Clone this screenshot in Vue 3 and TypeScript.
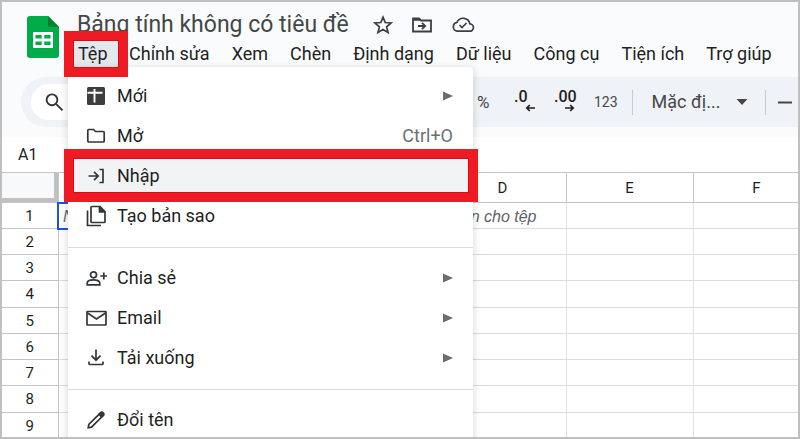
<script setup lang="ts">
import { ref } from 'vue'

interface MenuEntry {
  icon: string
  label: string
  hint?: string
  submenu?: boolean
  marked?: boolean
}

const title = ref('Bảng tính không có tiêu đề')
const cellName = ref('A1')
const font = ref('Mặc đị...')

const menus = ['Chỉnh sửa', 'Xem', 'Chèn', 'Định dạng', 'Dữ liệu', 'Công cụ', 'Tiện ích', 'Trợ giúp']

const groups: MenuEntry[][] = [
  [
    { icon: 'new', label: 'Mới', submenu: true },
    { icon: 'folder', label: 'Mở', hint: 'Ctrl+O' },
    { icon: 'import', label: 'Nhập', marked: true },
    { icon: 'copy', label: 'Tạo bản sao' },
  ],
  [
    { icon: 'share', label: 'Chia sẻ', submenu: true },
    { icon: 'mail', label: 'Email', submenu: true },
    { icon: 'download', label: 'Tải xuống', submenu: true },
  ],
  [{ icon: 'rename', label: 'Đổi tên' }],
]

const columns = ['', '', '', 'D', 'E', 'F']
const rows = [1, 2, 3, 4, 5, 6, 7, 8, 9]
const cells: Record<string, string> = { '1-0': 'N', '1-3': 'n cho tệp' }
</script>

<template>
  <div class="app">
    <header class="header">
      <svg class="logo" viewBox="0 0 32 42" aria-hidden="true">
        <path d="M3 0H21L32 11V39a3 3 0 0 1-3 3H3a3 3 0 0 1-3-3V3a3 3 0 0 1 3-3Z" fill="#00ac47" />
        <path d="M21 0L32 11H23a2 2 0 0 1-2-2Z" fill="#00832d" />
        <path fill-rule="evenodd" d="M6 16H26V32H6ZM8.500 19V22.500H14.700V19ZM17.300 19V22.500H23.500V19ZM8.500 25.500V29H14.700V25.500ZM17.300 25.500V29H23.500V25.500Z" fill="#fff" />
      </svg>
      <div class="heading">
        <div class="title-row">
          <input v-model="title" class="title" aria-label="Tên bảng tính" />
          <button class="icon-button" aria-label="Gắn dấu sao">
            <svg width="20" height="20" viewBox="0 0 20 20" fill="none" stroke="#3c4043" stroke-width="1.700">
              <path d="M10 2.200L12.200 7.500L18 8L13.600 11.800L15 17.400L10 14.400L5 17.400L6.400 11.800L2 8L7.800 7.500Z" />
            </svg>
          </button>
          <button class="icon-button" aria-label="Di chuyển">
            <svg width="22" height="20" viewBox="0 0 22 20" fill="none" stroke="#3c4043" stroke-width="1.800">
              <path d="M2 3.500H8L10 5.500H20V16.500H2Z" />
              <path d="M2 4.500H9" stroke-width="2.500" />
              <path d="M7 11H14M11 7.800L14.200 11L11 14.200" />
            </svg>
          </button>
          <button class="icon-button" aria-label="Trạng thái lưu">
            <svg width="24" height="20" viewBox="0 0 24 20" fill="none" stroke="#3c4043" stroke-width="1.700">
              <path d="M6.500 16.200H18.500a3.700 3.700 0 0 0 .4-7.400A6.800 6.800 0 0 0 6 7.300A4.500 4.500 0 0 0 6.500 16.200Z" />
              <path d="M8.500 10L11 12.500L15.500 8" />
            </svg>
          </button>
        </div>
        <nav class="menubar">
          <div class="file">
            <button class="bar-button file-button marked">Tệp</button>
            <div class="menu" role="menu">
              <div v-for="(group, g) in groups" :key="g" class="group">
                <button
                  v-for="item in group"
                  :key="item.label"
                  class="item"
                  :class="{ marked: item.marked }"
                  role="menuitem"
                >
                  <svg class="item-icon" viewBox="0 0 22 22" fill="none" stroke="#333638" stroke-width="1.700" aria-hidden="true">
                    <template v-if="item.icon === 'new'">
                      <rect x="2" y="2" width="18" height="18" rx="1.500" fill="#3c3e40" stroke="none" />
                      <path d="M2.500 7.800H17.500M9.500 4V17.500" stroke="#fff" stroke-width="1.900" />
                    </template>
                    <path v-else-if="item.icon === 'folder'" d="M2.800 5.500a1 1 0 0 1 1-1H8.500L10.500 6.500H18.200a1 1 0 0 1 1 1V16a1 1 0 0 1-1 1H3.800a1 1 0 0 1-1-1Z" />
                    <path v-else-if="item.icon === 'import'" d="M3.500 11H13M9 6.800L13.200 11L9 15.200M14.500 4.500H18V17.500H14.500" />
                    <template v-else-if="item.icon === 'copy'">
                      <path d="M7 1.500H15L20 6.500V16.500a1 1 0 0 1-1 1H7a1 1 0 0 1-1-1V2.500a1 1 0 0 1 1-1Z" />
                      <path d="M14.500 1.500V7H20" fill="#333638" />
                      <path d="M2.500 5.500V20.500H16" />
                    </template>
                    <template v-else-if="item.icon === 'share'">
                      <circle cx="8.500" cy="7.800" r="3" />
                      <path d="M2.200 17.800V16C2.200 11.800 14.800 11.800 14.800 16V17.800Z M18.800 5.500V12.500M15.300 9H22" />
                    </template>
                    <template v-else-if="item.icon === 'mail'">
                      <rect x="2" y="4.500" width="19" height="13.500" rx="0.500" />
                      <path d="M2.500 6L11.500 12L20.500 6" />
                    </template>
                    <path v-else-if="item.icon === 'download'" d="M11 2.500V13M6.500 8.700L11 13.200L15.500 8.700M4 14.500V16.500a1 1 0 0 0 1 1H17a1 1 0 0 0 1-1V14.500" />
                    <template v-else>
                      <path d="M3.200 18.800L3.800 15.500L15 4.300a1.800 1.800 0 0 1 2.700 2.700L6.500 18.200Z" />
                      <path d="M14 5.300L15.500 3.800a1.800 1.800 0 0 1 2.700 2.700L16.700 8Z" fill="#333638" />
                    </template>
                  </svg>
                  <span class="item-label">{{ item.label }}</span>
                  <span v-if="item.hint" class="hint">{{ item.hint }}</span>
                  <svg v-if="item.submenu" class="chevron" viewBox="0 0 10 10" aria-hidden="true">
                    <path d="M0 0.500L10 5L0 9.500Z" fill="#6b6d70" />
                  </svg>
                </button>
              </div>
            </div>
          </div>
          <button v-for="name in menus" :key="name" class="bar-button">{{ name }}</button>
        </nav>
      </div>
    </header>

    <div class="toolbar-wrap">
      <div class="toolbar">
        <button class="search" aria-label="Tìm trong trình đơn">
          <svg width="20" height="20" viewBox="0 0 20 20" fill="none" stroke="#333638" stroke-width="1.900">
            <circle cx="8" cy="7.800" r="5.400" />
            <path d="M12 11.800L18.500 18.300" />
          </svg>
        </button>
        <button class="tool percent">%</button>
        <button class="tool decimal" aria-label="Giảm số thập phân">
          <span>.0</span>
          <svg width="10" height="8" viewBox="0 0 10 8" fill="none" stroke="#1f1f1f" stroke-width="1.700">
            <path d="M10 4H2M4.800 1L1.800 4L4.800 7" />
          </svg>
        </button>
        <button class="tool decimal" aria-label="Tăng số thập phân">
          <span>.00</span>
          <svg width="10" height="8" viewBox="0 0 10 8" fill="none" stroke="#1f1f1f" stroke-width="1.700">
            <path d="M0 4H8M5.200 1L8.200 4L5.200 7" />
          </svg>
        </button>
        <button class="tool">123</button>
        <span class="divider"></span>
        <label class="font">
          <select v-model="font" aria-label="Phông chữ">
            <option>Mặc đị...</option>
          </select>
          <svg width="12" height="6" viewBox="0 0 12 6" aria-hidden="true">
            <path d="M0.500 0H11.500L6 6Z" fill="#444746" />
          </svg>
        </label>
        <span class="divider"></span>
        <button class="tool" aria-label="Giảm cỡ chữ">
          <svg width="14" height="20" viewBox="0 0 14 20"><path d="M0 10.500H14" stroke="#444746" stroke-width="2" /></svg>
        </button>
      </div>
    </div>

    <div class="name-row">
      <input v-model="cellName" class="name-box" aria-label="Hộp tên" />
    </div>

    <div class="sheet">
      <table class="grid">
        <colgroup>
          <col class="index-col" />
          <col v-for="(_, i) in columns" :key="i" class="data-col" />
        </colgroup>
        <thead>
          <tr>
            <td class="corner"></td>
            <th v-for="(name, i) in columns" :key="i" scope="col">{{ name }}</th>
          </tr>
        </thead>
        <tbody>
          <tr v-for="row in rows" :key="row">
            <th scope="row">{{ row }}</th>
            <td v-for="(_, i) in columns" :key="i" :class="{ active: row === 1 && i === 0, tail: i === 3 }">
              {{ cells[`${row}-${i}`] }}
            </td>
          </tr>
        </tbody>
      </table>
    </div>
  </div>
</template>

<style>
body {
  margin: 0;
}
</style>

<style scoped>
.app {
  box-sizing: border-box;
  height: 100vh;
  display: flex;
  flex-direction: column;
  overflow: hidden;
  border: 2px solid #bfbfbf;
  background: #fff;
  color: #1f1f1f;
  font-family: Roboto, "Liberation Sans", sans-serif;
}

button,
input,
select {
  margin: 0;
  padding: 0;
  border: 0;
  background: none;
  color: inherit;
  font: inherit;
  outline: none;
}

svg {
  display: block;
  flex: none;
}

.header {
  display: flex;
  flex: none;
  padding: 6px 0 9px 25px;
  background: #f9fbfd;
}

.logo {
  width: 32px;
  height: 42px;
  margin-top: 8px;
}

.heading {
  flex: 1;
  min-width: 0;
  padding-left: 12px;
}

.title-row {
  display: flex;
  align-items: center;
  gap: 18px;
  height: 32px;
  padding-left: 6px;
}

.title {
  width: 278px;
  height: 32px;
  color: #444746;
  font-size: 23px;
}

.icon-button {
  padding-top: 2px;
}

.menubar {
  display: flex;
  align-items: center;
  gap: 22px;
  height: 28px;
  padding-left: 2px;
  font-size: 18px;
  white-space: nowrap;
}

.bar-button {
  height: 28px;
  padding-bottom: 2px;
}

.file {
  position: relative;
  margin-right: -12px;
}

.file-button {
  position: relative;
  width: 46px;
  padding-left: 5px;
  background: #e4e8ec;
  text-align: left;
}

.marked::after {
  content: "";
  position: absolute;
  z-index: 3;
  inset: -9px;
  border: 9px solid #ed1c24;
  box-shadow: inset 0 0 0 1px #e30613;
  pointer-events: none;
}

.menu {
  position: absolute;
  z-index: 2;
  top: 27px;
  left: -5px;
  width: 405px;
  padding-top: 9px;
  border-radius: 4px;
  background: #fff;
  box-shadow: 0 2px 6px 2px rgba(60, 64, 67, 0.15);
}

.group + .group {
  margin-top: 11px;
  padding-top: 10px;
  border-top: 1px solid #dadce0;
}

.item {
  position: relative;
  display: flex;
  align-items: center;
  width: 100%;
  height: 40px;
  padding: 0 20px 1px 17px;
  text-align: left;
}

.item.marked {
  background: #f1f3f4;
}

.item.marked::after {
  inset: -7px -5px -6px -4px;
}

.item-icon {
  width: 22px;
  height: 22px;
}

.item-label {
  flex: 1;
  padding-left: 10px;
}

.hint {
  color: #6b7075;
}

.chevron {
  width: 10px;
  height: 10px;
}

.toolbar-wrap {
  flex: none;
  padding: 0 0 10px 19px;
  background: #f9fbfd;
}

.toolbar {
  display: flex;
  align-items: center;
  height: 50px;
  border-radius: 25px 0 0 25px;
  background: #eff3f8;
  overflow: hidden;
}

.search {
  flex: none;
  width: 426px;
  height: 36px;
  margin: 0 20px 0 10px;
  padding-left: 13px;
  border-radius: 18px;
  background: #fff;
}

.tool {
  flex: none;
  margin-right: 19px;
  color: #444746;
  font-size: 14px;
}

.percent {
  width: 18px;
  font-size: 17px;
  text-align: left;
}

.decimal {
  display: flex;
  flex-direction: column;
  align-items: flex-start;
  width: 21px;
  padding-bottom: 2px;
  color: #1f1f1f;
  font-size: 16px;
  font-weight: 500;
  line-height: 14px;
}

.decimal svg {
  align-self: flex-end;
}

.divider {
  flex: none;
  width: 1px;
  height: 25px;
  background: #c7c9cc;
}

.tool + .divider {
  margin-left: -5px;
}

.font {
  display: flex;
  flex: none;
  align-items: center;
  gap: 14px;
  margin: 0 17px 0 19px;
}

.font select {
  width: 70px;
  height: 28px;
  padding-bottom: 2px;
  appearance: none;
  color: #444746;
  font-size: 18px;
}

.divider + .tool {
  margin-left: 12px;
}

.name-row {
  flex: none;
  height: 35px;
  padding-left: 16px;
}

.name-box {
  width: 50px;
  height: 35px;
  font-size: 16px;
}

.sheet {
  flex: 1;
  min-height: 0;
  overflow: hidden;
}

.grid {
  width: 818px;
  border-collapse: collapse;
  table-layout: fixed;
}

.index-col {
  width: 56px;
}

.data-col {
  width: 127px;
}

.grid th,
.grid td {
  box-sizing: border-box;
  height: 26px;
  padding: 0;
  border-right: 1px solid #e0e0e0;
  border-bottom: 1px solid #dcdcdc;
  font-size: 16px;
  font-weight: 400;
  line-height: 20px;
  white-space: nowrap;
}

.grid tbody tr:nth-child(4n) th {
  height: 27px;
}

.grid thead th,
.grid thead .corner {
  height: 30px;
  border: 1px solid #c4c4c4;
  font-size: 15px;
}

.grid thead .corner {
  border-left: 0;
  background: #f8f9fa;
  box-shadow: inset -4px -4px 0 #c0c0c0;
}

.grid tbody th {
  border-color: #c4c4c4;
  font-size: 15px;
}

.grid tbody td {
  padding: 2px 0 0 4px;
  color: #5f6368;
  font-family: "Liberation Sans", sans-serif;
  font-style: italic;
}

.grid td.active {
  border: 2px solid #1a56db;
}

.grid td.tail {
  padding-right: 29px;
  text-align: right;
}
</style>
